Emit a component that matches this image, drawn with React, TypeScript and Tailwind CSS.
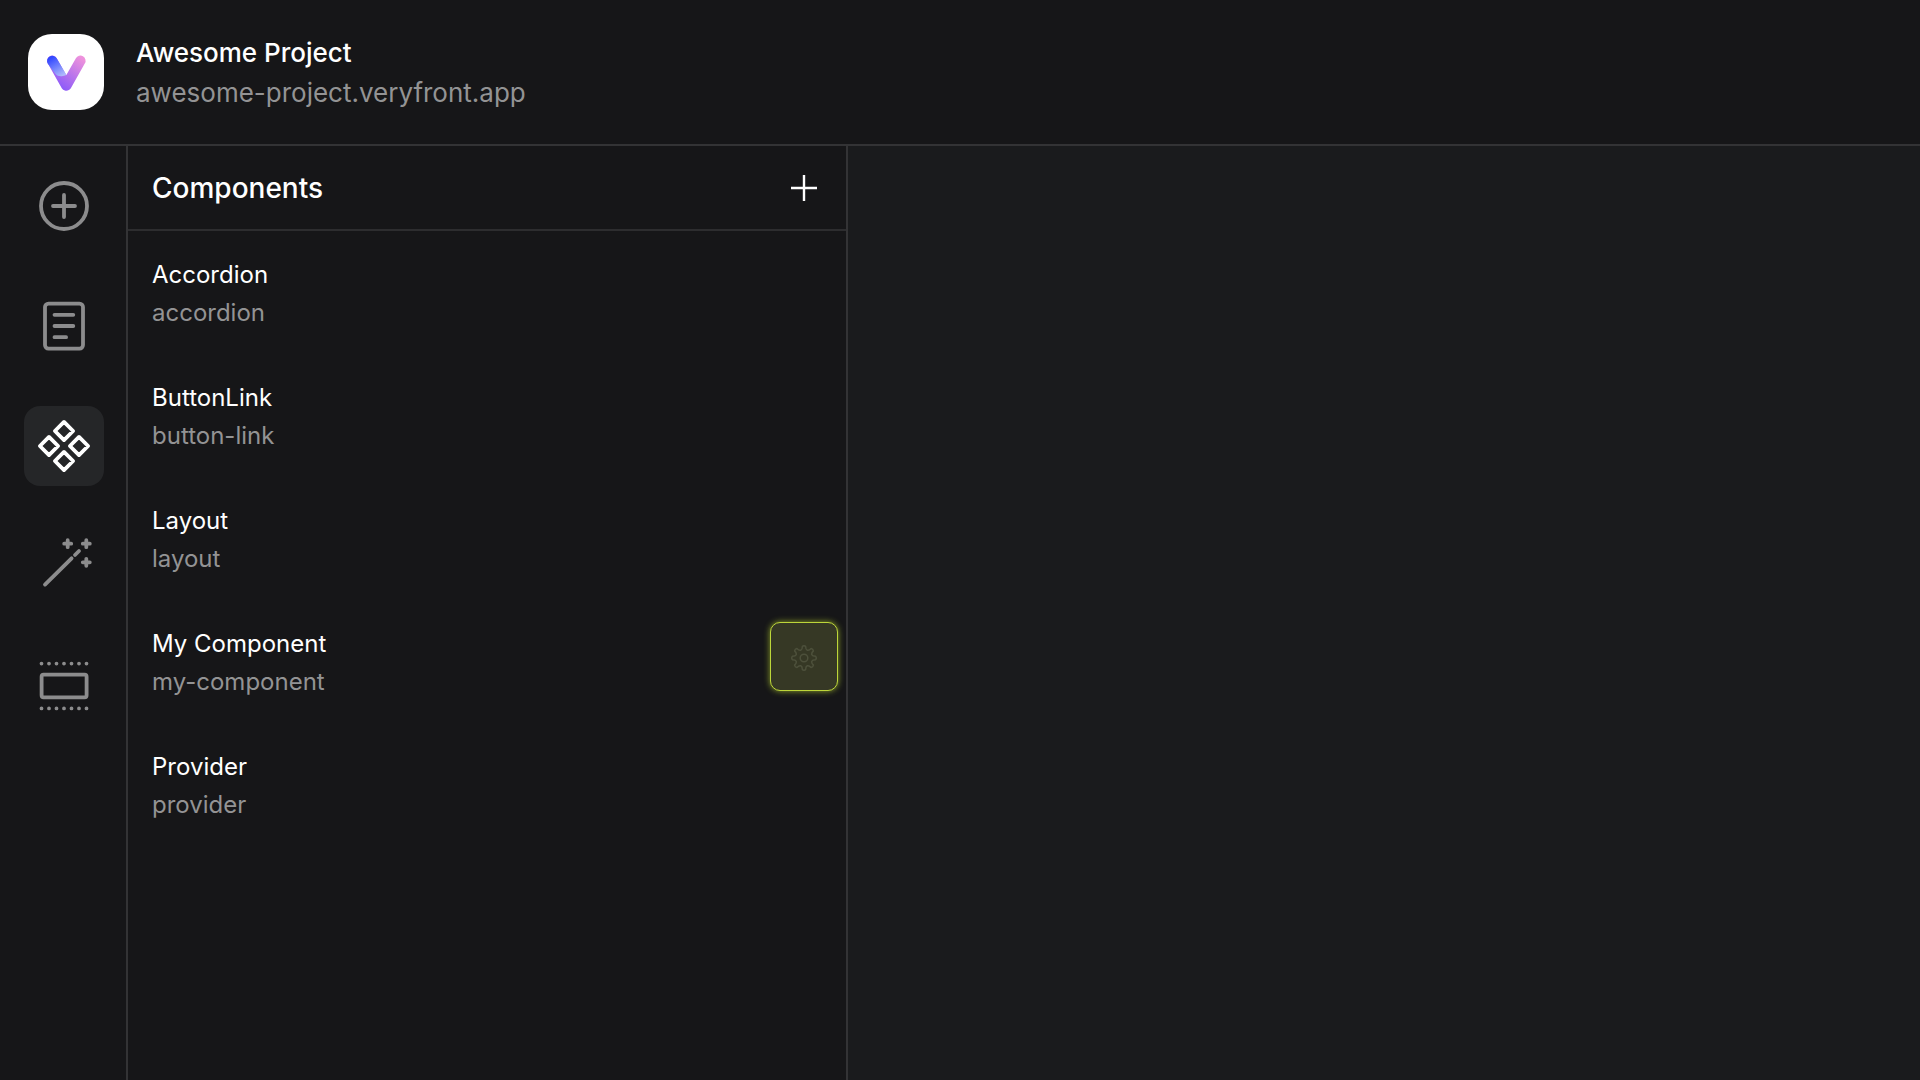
import type { ReactNode } from "react";

const COMPONENTS = [
  { name: "Accordion", slug: "accordion" },
  { name: "ButtonLink", slug: "button-link" },
  { name: "Layout", slug: "layout" },
  { name: "My Component", slug: "my-component", highlighted: true },
  { name: "Provider", slug: "provider" },
];

const NAV_ITEMS: { label: string; active?: boolean; icon: ReactNode }[] = [
  {
    label: "Add",
    icon: (
      <>
        <circle cx="40" cy="40" r="23" />
        <path d="M40 29v22M29 40h22" />
      </>
    ),
  },
  {
    label: "Pages",
    icon: (
      <>
        <rect x="21" y="17.6" width="38" height="45" rx="3.5" />
        <path d="M30.5 28.8h18.8M30.5 40h18.8M30.5 51.2h11.6" />
      </>
    ),
  },
  {
    label: "Components",
    active: true,
    icon: (
      <path d="M40 15.9l9.1 9.1-9.1 9.1-9.1-9.1zM25 30.9l9.1 9.1-9.1 9.1-9.1-9.1zM55 30.9l9.1 9.1-9.1 9.1-9.1-9.1zM40 45.9l9.1 9.1-9.1 9.1-9.1-9.1z" />
    ),
  },
  {
    label: "Generate",
    icon: (
      <path d="M21 58.6l26.6-26.3M51 29l4-4M43.7 14.2v7M40.2 17.7h7M62.3 14.2v7M58.8 17.7h7M62.3 32.8v7M58.8 36.3h7" />
    ),
  },
  {
    label: "Sections",
    icon: (
      <>
        <rect x="17.6" y="28.7" width="45" height="22.6" rx="2" />
        <path d="M17.5 17.6h45.1M17.5 62.4h45.1" strokeDasharray="0 7.5" />
      </>
    ),
  },
];

function polar(radius: number, degrees: number) {
  const angle = (degrees * Math.PI) / 180;
  return `${(radius * Math.sin(angle)).toFixed(2)} ${(-radius * Math.cos(angle)).toFixed(2)}`;
}

// Eight rounded teeth, one every 45 degrees, joined by smooth valleys
const GEAR_PATH =
  `M${polar(11.8, -8)}` +
  Array.from({ length: 8 }, (_, i) => {
    const a = i * 45;
    return `Q${polar(12.8, a)} ${polar(11.8, a + 8)}C${polar(7.6, a + 12)} ${polar(7.6, a + 33)} ${polar(11.8, a + 37)}`;
  }).join("") +
  "Z";

function GearIcon() {
  return (
    <svg viewBox="-13 -13 26 26" className="size-[26px]" fill="none" stroke="currentColor" strokeWidth="1.5" strokeLinejoin="round">
      <path d={GEAR_PATH} />
      <circle r="3.8" />
    </svg>
  );
}

function Logo() {
  return (
    <svg viewBox="0 0 76 76" className="size-[76px] shrink-0 rounded-3xl bg-white" fill="none">
      <defs>
        <linearGradient id="logo-body" x1="54" y1="24" x2="32" y2="52" gradientUnits="userSpaceOnUse">
          <stop stopColor="#ee92dc" />
          <stop offset="1" stopColor="#8f5cf8" />
        </linearGradient>
        <linearGradient id="logo-arm" x1="23" y1="24" x2="34" y2="42" gradientUnits="userSpaceOnUse">
          <stop stopColor="#3248ff" />
          <stop offset="1" stopColor="#b0bafb" />
        </linearGradient>
      </defs>
      <path
        d="M24.2 26.8l14.1 24.8 14.1-24.8"
        stroke="url(#logo-body)"
        strokeWidth="10.4"
        strokeLinecap="round"
        strokeLinejoin="round"
      />
      <path
        d="M19.7 29.4a5.2 5.2 0 0 1 9-5.2l9.6 16.6c-2.2 1.5-4.2 1.6-6.8 1.2-2.3-.4-3.9-1.6-5.1-3.6z"
        fill="url(#logo-arm)"
      />
    </svg>
  );
}

export default function App() {
  return (
    <div className="flex min-h-screen flex-col bg-[#161618] font-['Inter',sans-serif] text-white">
      <header className="flex h-[146px] items-center gap-8 border-b-2 border-[#333335] px-7">
        <Logo />
        <div className="pt-0.5 text-[26px] leading-10">
          <h1 className="font-medium">Awesome Project</h1>
          <p className="text-[#939394]">awesome-project.veryfront.app</p>
        </div>
      </header>

      <div className="flex grow">
        <nav className="flex w-32 shrink-0 flex-col items-start gap-10 border-r-2 border-[#333335] pt-5 pl-6">
          {NAV_ITEMS.map((item) => (
            <button
              key={item.label}
              aria-label={item.label}
              className={`rounded-2xl ${item.active ? "bg-[#252628] text-white" : "text-[#8c8c8d]"}`}
            >
              <svg
                viewBox="0 0 80 80"
                className="size-20"
                fill="none"
                stroke="currentColor"
                strokeWidth="3.8"
                strokeLinecap="round"
                strokeLinejoin="round"
              >
                {item.icon}
              </svg>
            </button>
          ))}
        </nav>

        <section className="w-[720px] shrink-0 border-r-2 border-[#333335]">
          <div className="flex h-[85px] items-center justify-between border-b-2 border-[#2d2d2f] pr-2 pl-6">
            <h2 className="text-[28px] leading-[44px] font-medium">Components</h2>
            <button aria-label="New component" className="flex w-[68px] justify-center">
              <svg viewBox="0 0 26 26" className="size-[26px]" stroke="currentColor" strokeWidth="2.4">
                <path d="M13 0v26M0 13h26" />
              </svg>
            </button>
          </div>
          <ul>
            {COMPONENTS.map((component) => (
              <li key={component.slug} className="flex h-[123px] items-start justify-between pt-[22px] pr-2 pl-6">
                <div className="pt-[3px] text-2xl leading-[38px]">
                  <p>{component.name}</p>
                  <p className="text-[#939394]">{component.slug}</p>
                </div>
                {component.highlighted && (
                  <button
                    aria-label="Component settings"
                    className="flex h-[69px] w-[68px] items-center justify-center rounded-[10px] border border-[#bdd63a] bg-[#363825] pt-0.5 text-[#4d503b] shadow-[0_0_6px_0_#8fa32a]"
                  >
                    <GearIcon />
                  </button>
                )}
              </li>
            ))}
          </ul>
        </section>

        <main className="grow bg-[#1a1b1d]" />
      </div>
    </div>
  );
}
